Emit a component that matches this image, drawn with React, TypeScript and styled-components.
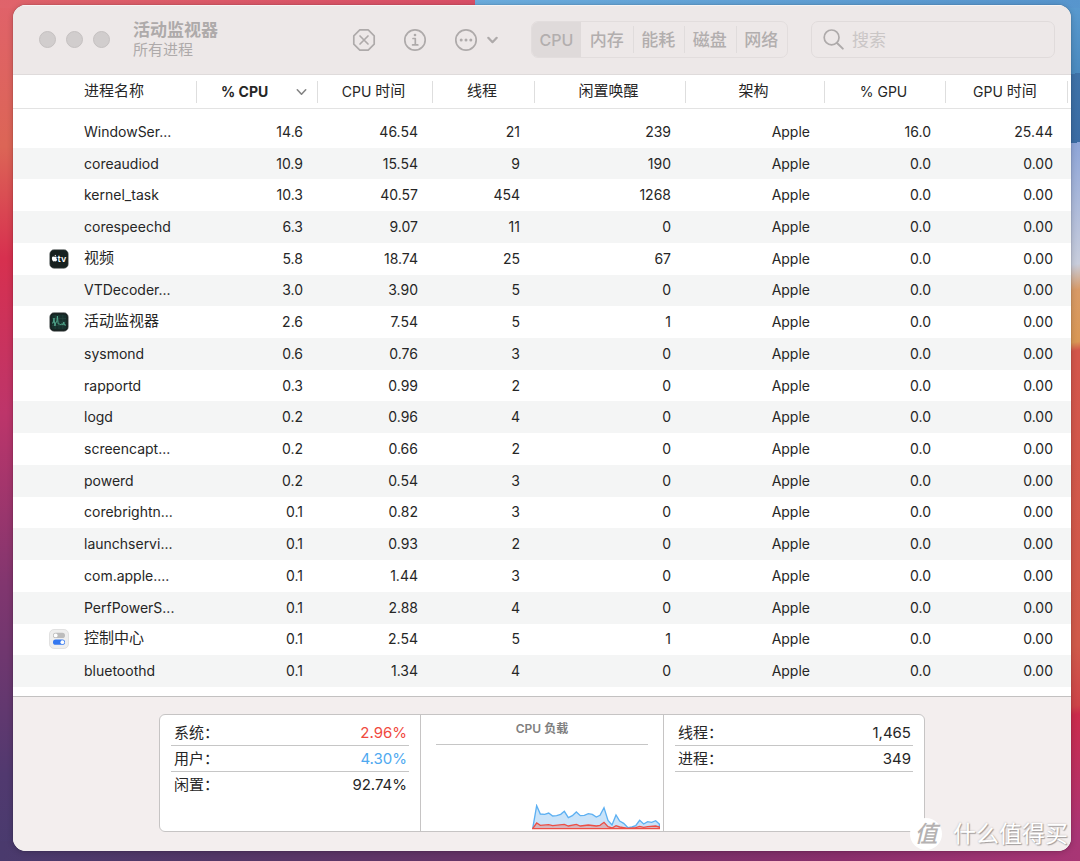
import React from "react";
import styled, { createGlobalStyle, css } from "styled-components";

const GlobalStyle = createGlobalStyle`
  *, *::before, *::after { box-sizing: border-box; }
  body {
    margin: 0;
    font-family: Inter, "Noto Sans CJK SC", sans-serif;
    font-size: 14px;
    color: #262626;
  }
  button, input {
    font: inherit;
    color: inherit;
    margin: 0;
    padding: 0;
    border: 0;
    background: none;
  }
`;

const Desktop = styled.div`
  position: relative;
  display: flex;
  min-height: 100vh;
  padding: 5px 9px 10px 13px;
  background:
    linear-gradient(90deg, #4a3a6d 0%, #533767 20%, #6b3367 50%, #8a2f6c 78%, #a83675 100%) left bottom / 100% 20px no-repeat,
    linear-gradient(207deg, #5795cd 0%, #6cadde 99%, transparent 99%) right top / 56% 8px no-repeat,
    linear-gradient(30deg, #e0646b 0%, #d94c66 100%) left top / 50% 8px no-repeat,
    linear-gradient(
      170deg,
      #5b9cd1 0%, #4a8abf 9%, #3e72a8 9%, #3b6ca4 17%,
      #8ea5d8 17%, #c8cddc 31%, #d89a66 34%, #d99855 40%,
      #d3564b 41%, #d05a4a 75%, #cd4448 82%, #cb2b4c 83%, #a93576 97%
    ) right top / 30px 100% no-repeat,
    linear-gradient(180deg, #e0626a 0%, #dc6556 17%, #d7304f 30%, #bd356a 48%, #81366f 68%, #51396f 90%, #483b6e 100%);
`;

const Window = styled.main`
  flex: 1;
  min-width: 0;
  display: flex;
  flex-direction: column;
  overflow: hidden;
  border-radius: 13px;
  background: #fff;
  box-shadow: 0 0 1px rgba(0, 0, 0, 0.5), 0 1px 6px rgba(0, 0, 0, 0.2);
`;

const Toolbar = styled.header`
  display: flex;
  align-items: center;
  height: 70px;
  padding: 0 16px 0 26px;
  background: #ede8e8;
  border-bottom: 1px solid #dfdbdb;
  box-shadow: inset 0 1px #f7f4f4;
  color: #aeaaaa;
`;

const TrafficLights = styled.div`
  display: flex;
  gap: 10px;
  margin-right: 23px;
`;

const Light = styled.button`
  width: 17px;
  height: 17px;
  border: 1px solid #c5c1c1;
  border-radius: 50%;
  background: #d1cdcd;
`;

const Titles = styled.div`
  flex: 1;
  min-width: 96px;
`;

const Title = styled.h1`
  margin: 0;
  font-size: 17px;
  font-weight: 700;
  line-height: 20px;
`;

const Subtitle = styled.div`
  font-size: 15px;
  line-height: 20px;
`;

const Actions = styled.div`
  display: flex;
  align-items: center;
  gap: 27px;
  margin-right: 33px;
`;

const IconButton = styled.button`
  display: flex;
  align-items: center;
  gap: 9px;
`;

const Segments = styled.div`
  display: flex;
  width: 257px;
  height: 37px;
  margin-right: 23px;
  border: 1px solid #e2dddd;
  border-radius: 7px;
  overflow: hidden;
`;

const Segment = styled.button<{ $active?: boolean }>`
  position: relative;
  flex: 1;
  font-size: 17px;
  font-weight: 500;
  line-height: 24px;
  color: #b2aeae;
  ${(p) =>
    p.$active
      ? css`
          flex: 0 0 49px;
          font-size: 16px;
          background: #dfdada;
        `
      : css`
          & + &::before {
            content: "";
            position: absolute;
            left: 0;
            top: 4px;
            bottom: 4px;
            width: 1px;
            background: #e0dcdc;
          }
        `}
`;

const Search = styled.label`
  display: flex;
  align-items: center;
  gap: 8px;
  width: 244px;
  height: 37px;
  padding: 0 11px;
  border: 1px solid #e0dbdb;
  border-radius: 7px;
  input {
    flex: 1;
    min-width: 0;
    outline: 0;
    font-size: 17px;
    line-height: 24px;
  }
  input::placeholder {
    color: #cac6c6;
    opacity: 1;
  }
`;

const Processes = styled.section`
  flex: 1;
  display: flex;
  flex-direction: column;
  padding-bottom: 9px;
  border-bottom: 1px solid #c3c1c1;
`;

const Table = styled.table`
  flex: 1;
  width: 100%;
  table-layout: fixed;
  border-collapse: separate;
  border-spacing: 0;
`;

const HeadCell = styled.th`
  height: 34px;
  padding: 0;
  border-bottom: 1px solid #e3e3e3;
  font-weight: 400;
`;

const SortButton = styled.button<{ $align?: "left"; $sorted?: boolean }>`
  display: flex;
  align-items: center;
  justify-content: ${(p) => (p.$align === "left" ? "flex-start" : "center")};
  width: 100%;
  height: 22px;
  padding: ${(p) => (p.$align === "left" ? "0 0 0 71px" : "0 3px 0 0")};
  border-right: 1px solid #dedede;
  font-weight: ${(p) => (p.$sorted ? 700 : 400)};
  white-space: nowrap;
  ${(p) =>
    p.$sorted &&
    css`
      justify-content: space-between;
      padding: 0 10px 0 24px;
      svg {
        color: #858585;
      }
    `}
`;

const Spacer = styled.tr`
  height: 7px;
  td {
    padding: 0;
  }
`;

const Row = styled.tr`
  &:nth-child(even) {
    background: #f4f5f5;
  }
`;

const Cell = styled.td`
  padding: 0 15px 0 0;
  text-align: right;
  line-height: 20px;
  white-space: nowrap;
`;

const NameCell = styled.th`
  padding: 0 0 0 36px;
  text-align: left;
  font-weight: 400;
  line-height: 20px;
`;

const Name = styled.div`
  display: grid;
  grid-template-columns: 20px 1fr;
  gap: 15px;
  align-items: center;
  height: 20px;
  white-space: nowrap;
  svg {
    display: block;
  }
`;

const Han = styled.span`
  font-size: 15px;
  line-height: 16px;
  vertical-align: 1px;
`;

const Footer = styled.footer`
  display: flex;
  justify-content: center;
  padding: 17px 16px 19px;
  background: #f3eeee;
`;

const Summary = styled.div`
  display: grid;
  grid-template-columns: 260px 243px 261px;
  height: 118px;
  border: 1px solid #c6c4c4;
  border-radius: 6px;
  background: #fff;
`;

const Panel = styled.section`
  padding: 5px 11px;
  & + & {
    border-left: 1px solid #c6c4c4;
  }
`;

const Stats = styled.dl`
  margin: 0;
  font-size: 15px;
`;

const Stat = styled.div<{ $line?: boolean }>`
  display: flex;
  justify-content: space-between;
  align-items: center;
  height: 26px;
  padding: 0 2px 0 3px;
  border-bottom: ${(p) => (p.$line ? "1px solid #c6c6c6" : "0")};
  line-height: 20px;
  dd {
    margin: 0;
  }
`;

const Red = styled.dd`
  color: #f0493e;
`;

const Blue = styled.dd`
  color: #4fa9f0;
`;

const LoadPanel = styled(Panel)`
  display: flex;
  flex-direction: column;
  justify-content: space-between;
  padding: 4px 3px 1px 15px;
`;

const LoadTitle = styled.h2`
  margin: 0 12px 0 0;
  height: 26px;
  border-bottom: 1px solid #c6c6c6;
  font-size: 12px;
  font-weight: 600;
  line-height: 20px;
  text-align: center;
  color: #808080;
`;

const Chart = styled.svg`
  align-self: flex-end;
`;

const Watermark = styled.div`
  position: absolute;
  right: 12px;
  bottom: 11px;
  display: flex;
  align-items: center;
  gap: 11px;
  color: #fff;
  font-size: 23px;
  line-height: 32px;
  text-shadow: 1px 1px 1px #a09c9c, 0 0 2px #b8b4b4;
`;

const Badge = styled.span`
  width: 32px;
  height: 32px;
  border-radius: 50%;
  background: #fff;
  color: #b5b2b2;
  font-style: italic;
  font-weight: 500;
  text-align: center;
  text-shadow: none;
`;

const StopIcon = () => (
  <svg width="24" height="24" viewBox="0 0 24 24" fill="none" stroke="currentColor" strokeWidth="1.7" strokeLinecap="round" strokeLinejoin="round">
    <path d="M7.8 1.8h8.4l6 6v8.4l-6 6H7.8l-6-6V7.8z" />
    <path d="M8 8l8 8M16 8l-8 8" />
  </svg>
);

const InfoIcon = () => (
  <svg width="24" height="24" viewBox="0 0 24 24" fill="none" stroke="currentColor" strokeWidth="1.7" strokeLinecap="round" strokeLinejoin="round">
    <circle cx="12" cy="12" r="10.2" />
    <path d="M10 10.5h2.3v6M9.6 16.9h5.2" />
    <circle cx="12" cy="7" r="1.3" fill="currentColor" stroke="none" />
  </svg>
);

const MoreIcon = () => (
  <svg width="24" height="24" viewBox="0 0 24 24" fill="none" stroke="currentColor" strokeWidth="1.7">
    <circle cx="12" cy="12" r="10.2" />
    <g fill="currentColor" stroke="none">
      <circle cx="7.2" cy="12" r="1.5" />
      <circle cx="12" cy="12" r="1.5" />
      <circle cx="16.8" cy="12" r="1.5" />
    </g>
  </svg>
);

const Chevron = ({ stroke = 2.2 }: { stroke?: number }) => (
  <svg width="11" height="8" viewBox="0 0 11 8" fill="none" stroke="currentColor" strokeWidth={stroke} strokeLinecap="round" strokeLinejoin="round">
    <path d="M1.3 1.8l4.2 4.4 4.2-4.4" />
  </svg>
);

const SearchIcon = () => (
  <svg width="21" height="21" viewBox="0 0 21 21" fill="none" stroke="currentColor" strokeWidth="1.7" strokeLinecap="round">
    <circle cx="8.6" cy="8.4" r="7.4" />
    <path d="M14 14l5.8 5.6" strokeWidth="2" />
  </svg>
);

const TvIcon = () => (
  <svg width="20" height="20" viewBox="0 0 20 20">
    <rect x="0.6" y="0.6" width="18.8" height="18.8" rx="4.5" fill="#17201f" stroke="#9a9f9e" strokeWidth="0.5" />
    <path d="M6.2 7.8c.6-.3 1.3-.2 1.7.3-.8.7-.6 2 .3 2.4-.3 1-.9 1.9-1.5 1.9-.4 0-.6-.2-1-.2s-.7.2-1 .2c-.8 0-1.8-1.7-1.8-3 0-1.5 1.1-2.1 1.9-1.7.5.3.9.3 1.4.1zM5.6 7.4c0-.8.5-1.4 1.3-1.6.1.9-.5 1.6-1.3 1.6z" fill="#fff" />
    <text x="8.6" y="12.5" fontSize="9" fontWeight="600" fill="#fff">tv</text>
  </svg>
);

const MonitorIcon = () => (
  <svg width="20" height="20" viewBox="0 0 20 20" fill="none">
    <rect x="0.6" y="0.6" width="18.8" height="18.8" rx="4.5" fill="#17201f" stroke="#9a9f9e" strokeWidth="0.5" />
    <rect x="2.5" y="2.5" width="15" height="15" rx="2" fill="#16302c" />
    <path d="M6.2 3v14M10 3v14M13.8 3v14M3 6.5h14M3 10h14M3 13.5h14" stroke="#27473f" strokeWidth="0.6" />
    <path d="M3 11h1.2l.8-5 .9 8 1.1-4h.8l.6-6 .8 8h1.6l1 1 1.2-1.5 1 1.5.8-3 .7 3H17" stroke="#54ad91" strokeWidth="0.9" />
  </svg>
);

const ControlIcon = () => (
  <svg width="20" height="20" viewBox="0 0 20 20">
    <rect x="0.5" y="0.5" width="19" height="19" rx="4.5" fill="#eeeeee" stroke="#d8d8d8" strokeWidth="0.7" />
    <rect x="4" y="3.8" width="12" height="5.2" rx="2.6" fill="#bcbcbc" />
    <circle cx="6.7" cy="6.4" r="1.9" fill="#fff" />
    <rect x="4" y="10.6" width="12" height="5.2" rx="2.6" fill="#3478f0" />
    <circle cx="13.4" cy="13.2" r="1.9" fill="#fff" />
  </svg>
);

const columns: { label: string; width?: number }[] = [
  { label: "进程名称" },
  { label: "% CPU", width: 121 },
  { label: "CPU 时间", width: 115 },
  { label: "线程", width: 102 },
  { label: "闲置唤醒", width: 151 },
  { label: "架构", width: 139 },
  { label: "% GPU", width: 121 },
  { label: "GPU 时间", width: 122 },
];

type Process = [string, string, string, string, string, string?, string?, React.ReactNode?];

const processes: Process[] = [
  ["WindowSer...", "14.6", "46.54", "21", "239", "16.0", "25.44"],
  ["coreaudiod", "10.9", "15.54", "9", "190"],
  ["kernel_task", "10.3", "40.57", "454", "1268"],
  ["corespeechd", "6.3", "9.07", "11", "0"],
  ["视频", "5.8", "18.74", "25", "67", "0.0", "0.00", <TvIcon />],
  ["VTDecoder...", "3.0", "3.90", "5", "0"],
  ["活动监视器", "2.6", "7.54", "5", "1", "0.0", "0.00", <MonitorIcon />],
  ["sysmond", "0.6", "0.76", "3", "0"],
  ["rapportd", "0.3", "0.99", "2", "0"],
  ["logd", "0.2", "0.96", "4", "0"],
  ["screencapt...", "0.2", "0.66", "2", "0"],
  ["powerd", "0.2", "0.54", "3", "0"],
  ["corebrightn...", "0.1", "0.82", "3", "0"],
  ["launchservi...", "0.1", "0.93", "2", "0"],
  ["com.apple....", "0.1", "1.44", "3", "0"],
  ["PerfPowerS...", "0.1", "2.88", "4", "0"],
  ["控制中心", "0.1", "2.54", "5", "1", "0.0", "0.00", <ControlIcon />],
  ["bluetoothd", "0.1", "1.34", "4", "0"],
];

const splitHan = (label: string) =>
  label.split(/([\u4e00-\u9fff]+)/).filter(Boolean).map((part) =>
    /[\u4e00-\u9fff]/.test(part) ? <Han key={part}>{part}</Han> : <span key={part}>{part}</span>
  );

const userLoad =
  "366,414 378,345 389,370 402,371 414,367 426,376 438,375 450,371 461,362 473,381 485,375 497,364 509,375 521,374 533,369 545,371 557,379 568,374 580,351 592,389 604,403 616,373 627,391 639,398 652,411 664,409 675,405 687,389 699,400 711,393 723,395 735,390 746,400 746,414";
const systemLoad =
  "366,414 378,397 389,404 414,402 426,405 461,401 473,406 497,401 509,406 533,403 557,406 568,404 580,395 592,408 604,412 616,405 627,409 652,413 675,411 687,407 699,410 711,408 735,406 746,409 746,414";

export default function App() {
  return (
    <>
      <GlobalStyle />
      <Desktop>
        <Window>
          <Toolbar>
            <TrafficLights>
              <Light aria-label="关闭" />
              <Light aria-label="最小化" />
              <Light aria-label="缩放" />
            </TrafficLights>
            <Titles>
              <Title>活动监视器</Title>
              <Subtitle>所有进程</Subtitle>
            </Titles>
            <Actions>
              <IconButton aria-label="停止"><StopIcon /></IconButton>
              <IconButton aria-label="信息"><InfoIcon /></IconButton>
              <IconButton aria-label="更多"><MoreIcon /><Chevron /></IconButton>
            </Actions>
            <Segments>
              <Segment $active>CPU</Segment>
              <Segment>内存</Segment>
              <Segment>能耗</Segment>
              <Segment>磁盘</Segment>
              <Segment>网络</Segment>
            </Segments>
            <Search>
              <SearchIcon />
              <input type="text" placeholder="搜索" aria-label="搜索" />
            </Search>
          </Toolbar>

          <Processes>
            <Table>
              <colgroup>
                {columns.map((c) => <col key={c.label} width={c.width} />)}
                <col width={3} />
              </colgroup>
              <thead>
                <tr>
                  {columns.map((c, i) => (
                    <HeadCell key={c.label} scope="col">
                      <SortButton $align={i === 0 ? "left" : undefined} $sorted={i === 1}>
                        {i === 1 ? <>{c.label}<Chevron stroke={1.6} /></> : <span>{splitHan(c.label)}</span>}
                      </SortButton>
                    </HeadCell>
                  ))}
                  <HeadCell as="td" />
                </tr>
                <Spacer><td colSpan={9} /></Spacer>
              </thead>
              <tbody>
                {processes.map(([name, cpu, time, threads, wakes, gpu = "0.0", gpuTime = "0.00", icon]) => (
                  <Row key={name}>
                    <NameCell scope="row">
                      <Name>
                        <span>{icon}</span>
                        <span>{splitHan(name)}</span>
                      </Name>
                    </NameCell>
                    <Cell>{cpu}</Cell>
                    <Cell>{time}</Cell>
                    <Cell>{threads}</Cell>
                    <Cell>{wakes}</Cell>
                    <Cell>Apple</Cell>
                    <Cell>{gpu}</Cell>
                    <Cell>{gpuTime}</Cell>
                    <td />
                  </Row>
                ))}
              </tbody>
            </Table>
          </Processes>

          <Footer>
            <Summary>
              <Panel>
                <Stats>
                  <Stat $line><dt>系统：</dt><Red>2.96%</Red></Stat>
                  <Stat $line><dt>用户：</dt><Blue>4.30%</Blue></Stat>
                  <Stat><dt>闲置：</dt><dd>92.74%</dd></Stat>
                </Stats>
              </Panel>
              <LoadPanel>
                <LoadTitle>CPU 负载</LoadTitle>
                <Chart width="128" height="26" viewBox="364 340 384 78" role="img" aria-label="CPU 负载">
                  <polygon points={userLoad} fill="#c9e3f9" />
                  <polyline points={userLoad} fill="none" stroke="#5db0f2" strokeWidth="4" />
                  <polygon points={systemLoad} fill="#d5b4bd" stroke="#ec4f46" strokeWidth="4" />
                </Chart>
              </LoadPanel>
              <Panel>
                <Stats>
                  <Stat $line><dt>线程：</dt><dd>1,465</dd></Stat>
                  <Stat $line><dt>进程：</dt><dd>349</dd></Stat>
                </Stats>
              </Panel>
            </Summary>
          </Footer>
        </Window>
        <Watermark><Badge>值</Badge>什么值得买</Watermark>
      </Desktop>
    </>
  );
}
